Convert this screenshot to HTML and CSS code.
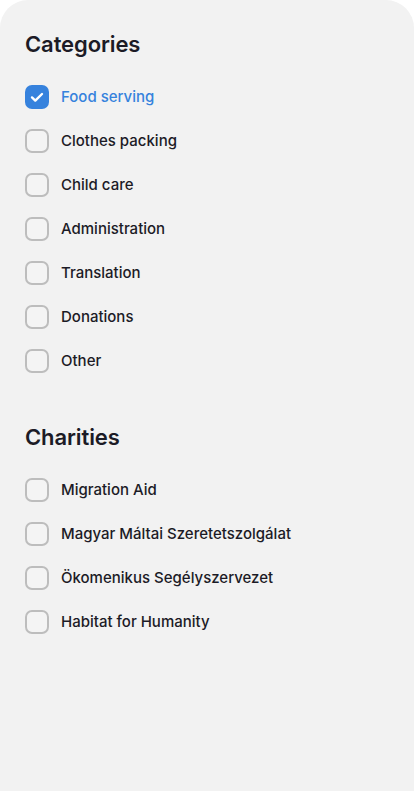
FILE: index.html
```html
<!DOCTYPE html>
<html lang="en">
<head>
<meta charset="utf-8">
<link rel="stylesheet" href="styles.css">
</head>
<body>
<div class="panel">
  <section class="group">
    <h2 class="title">Categories</h2>
    <ul class="list">
      <li class="row checked"><span class="box"><svg viewBox="0 0 24 24" width="24" height="24"><path d="M7 12.4l3.3 3.2L17 9" fill="none" stroke="#fff" stroke-width="2.4" stroke-linecap="round" stroke-linejoin="round"/></svg></span><span class="label">Food serving</span></li>
      <li class="row"><span class="box"></span><span class="label">Clothes packing</span></li>
      <li class="row"><span class="box"></span><span class="label">Child care</span></li>
      <li class="row"><span class="box"></span><span class="label">Administration</span></li>
      <li class="row"><span class="box"></span><span class="label">Translation</span></li>
      <li class="row"><span class="box"></span><span class="label">Donations</span></li>
      <li class="row"><span class="box"></span><span class="label">Other</span></li>
    </ul>
  </section>
  <section class="group">
    <h2 class="title">Charities</h2>
    <ul class="list">
      <li class="row"><span class="box"></span><span class="label">Migration Aid</span></li>
      <li class="row"><span class="box"></span><span class="label">Magyar Máltai Szeretetszolgálat</span></li>
      <li class="row"><span class="box"></span><span class="label">Ökomenikus Segélyszervezet</span></li>
      <li class="row"><span class="box"></span><span class="label">Habitat for Humanity</span></li>
    </ul>
  </section>
</div>
</body>
</html>
```
FILE: styles.css
```css
html, body {
  margin: 0;
  padding: 0;
  background: #ffffff;
}
body {
  font-family: Inter, "Noto Sans", sans-serif;
  color: #1c1b26;
}
.panel {
  background: #f2f2f2;
  border-radius: 28px 28px 0 0;
  min-height: 791px;
  box-sizing: border-box;
  padding: 30px 25px 0;
  display: flex;
  flex-direction: column;
  gap: 40px;
}
.title {
  margin: 0;
  font-size: 22px;
  line-height: 28px;
  font-weight: 600;
  color: #1c1b26;
  letter-spacing: -0.1px;
}
.list {
  list-style: none;
  margin: 17px 0 0;
  padding: 0;
}
.row {
  height: 44px;
  display: flex;
  align-items: center;
  gap: 12px;
}
.box {
  width: 24px;
  height: 24px;
  box-sizing: border-box;
  border: 2px solid #bdbdbd;
  border-radius: 7px;
  background: #f4f4f4;
  display: flex;
  align-items: center;
  justify-content: center;
  flex: none;
}
.checked .box {
  border: none;
  background: #3682dd;
}
.label {
  font-size: 15px;
  font-weight: 500;
  line-height: 20px;
}
.checked .label {
  color: #3682dd;
}
```
